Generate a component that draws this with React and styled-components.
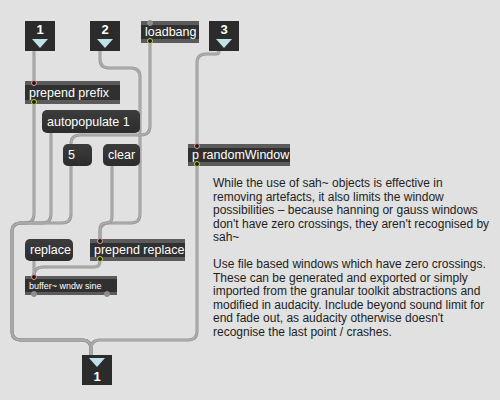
import React from 'react';
import styled, { createGlobalStyle } from 'styled-components';

const GlobalStyle = createGlobalStyle`
    html, body {
        margin: 0;
        padding: 0;
        background: #e1e1e1;
    }
    body {
        font-family: "Liberation Sans", Arial, sans-serif;
    }
`;

const Canvas = styled.div`
    position: relative;
    width: 500px;
    height: 400px;
    overflow: hidden;
    background: #e1e1e1;
`;

const Cords = styled.svg`
    position: absolute;
    left: 0;
    top: 0;
    pointer-events: none;
`;

// every box in the patcher sits at its own place on the canvas
const Node = styled.div`
    position: absolute;
    left: ${(p) => p.$x}px;
    top: ${(p) => p.$y}px;
    width: ${(p) => p.$w}px;
    height: ${(p) => p.$h}px;
    box-sizing: border-box;
`;

const IoBox = styled(Node)`
    background: #2b2b2b;
    display: flex;
    flex-direction: ${(p) => (p.$outlet ? 'column-reverse' : 'column')};
    align-items: center;
    justify-content: center;
    gap: 4px;
    color: #fff;
    font-weight: bold;
    font-size: 13px;
    line-height: 11px;
`;

const Arrow = styled.div`
    width: 0;
    height: 0;
    border-left: 8px solid transparent;
    border-right: 8px solid transparent;
    border-top: 9px solid #bfe2e9;
`;

const ObjBox = styled(Node)`
    background: #303030;
    border-top: ${(p) => p.$bar}px solid #5b5b5b;
    border-bottom: ${(p) => p.$bar}px solid #5b5b5b;
    color: #fff;
    font-size: ${(p) => p.$size || 12.5}px;
    padding-left: 4px;
    display: flex;
    align-items: center;
    white-space: nowrap;
`;

const MsgBox = styled(Node)`
    background: linear-gradient(#3c3c3c, #2c2c2c);
    border-radius: 5px;
    color: #fff;
    font-size: 12.5px;
    padding-left: 5px;
    display: flex;
    align-items: center;
    white-space: nowrap;
`;

const Port = styled.span`
    position: absolute;
    left: ${(p) => p.$x - 3}px;
    ${(p) => (p.$bottom ? 'bottom: -5px;' : 'top: -5px;')}
    width: 6px;
    height: 6px;
    border-radius: 50%;
    box-sizing: border-box;
    border: 1.5px solid ${(p) => (p.$kind === 'in' ? '#e39a8c' : p.$kind === 'out' ? '#c7cf45' : '#8d8d8d')};
    background: ${(p) => (p.$kind === 'idle' ? '#8d8d8d' : '#1c1c1c')};
`;

const Comment = styled.div`
    position: absolute;
    left: 213px;
    top: 177px;
    color: #1e1e1e;
    font-size: 12px;
    line-height: 13.5px;
    white-space: nowrap;
    p {
        margin: 0 0 13.5px 0;
    }
`;

const roundPath = (pts, r = 8) => {
    let d = `M${pts[0][0]},${pts[0][1]}`;
    for (let i = 1; i < pts.length - 1; i++) {
        const [x0, y0] = pts[i - 1];
        const [x1, y1] = pts[i];
        const [x2, y2] = pts[i + 1];
        const l1 = Math.hypot(x1 - x0, y1 - y0);
        const l2 = Math.hypot(x2 - x1, y2 - y1);
        const lim1 = i === 1 ? l1 : l1 / 2;
        const lim2 = i === pts.length - 2 ? l2 : l2 / 2;
        const rr = Math.min(r, lim1, lim2);
        const ax = x1 - ((x1 - x0) / l1) * rr;
        const ay = y1 - ((y1 - y0) / l1) * rr;
        const bx = x1 + ((x2 - x1) / l2) * rr;
        const by = y1 + ((y2 - y1) / l2) * rr;
        d += ` L${ax},${ay} Q${x1},${y1} ${bx},${by}`;
    }
    const last = pts[pts.length - 1];
    return d + ` L${last[0]},${last[1]}`;
};

const loop = [[12, 223], [12, 340], [91, 340], [91, 355]];

const cords = [
    [[34, 51], [34, 81]],
    [[100, 51], [100, 68], [140, 68], [140, 223], [100, 223], [100, 239]],
    [[150, 43], [150, 135], [71, 135], [71, 144]],
    [[34, 104], [34, 223], ...loop],
    [[51, 133], [51, 223], ...loop],
    [[71, 166], [71, 223], ...loop],
    [[112, 166], [112, 223], [100, 223], [100, 239]],
    [[219, 51], [219, 54], [197, 54], [197, 144]],
    [[197, 166], [197, 340], [91, 340], [91, 355]],
    [[100, 261], [100, 267], [34, 267], [34, 276]],
    [[34, 261], [34, 276]],
];

const Inlet = ({ x, y, n, outlet }) => (
    <IoBox $x={x} $y={y} $w={30} $h={30} $outlet={outlet}>
        <span>{n}</span>
        <Arrow />
    </IoBox>
);

const App = () => {
    return (
        <>
            <GlobalStyle />
            <Canvas>
                <Cords width="500" height="400">
                    {cords.map((pts, i) => (
                        <g key={i} fill="none" strokeLinejoin="round">
                            <path d={roundPath(pts, 9)} stroke="#979797" strokeWidth="3" />
                            <path d={roundPath(pts, 9)} stroke="#afafaf" strokeWidth="1.4" />
                        </g>
                    ))}
                </Cords>

                <Inlet x={25} y={21} n="1" />
                <Inlet x={90} y={21} n="2" />
                <ObjBox $x={141} $y={21} $w={58} $h={22} $bar={4}>
                    loadbang
                    <Port $kind="idle" $x={9} />
                    <Port $kind="out" $x={9} $bottom />
                </ObjBox>
                <Inlet x={209} y={21} n="3" />

                <ObjBox $x={25} $y={81} $w={95} $h={23} $bar={4}>
                    prepend prefix
                    <Port $kind="in" $x={9} />
                    <Port $kind="out" $x={9} $bottom />
                </ObjBox>

                <MsgBox $x={42} $y={110} $w={98} $h={23}>autopopulate 1</MsgBox>
                <MsgBox $x={63} $y={144} $w={29} $h={22}>5</MsgBox>
                <MsgBox $x={103} $y={144} $w={37} $h={22}>clear</MsgBox>

                <ObjBox $x={188} $y={144} $w={102} $h={22} $bar={4}>
                    p randomWindow
                    <Port $kind="in" $x={9} />
                    <Port $kind="out" $x={9} $bottom />
                </ObjBox>

                <MsgBox $x={25} $y={239} $w={48} $h={22}>replace</MsgBox>
                <ObjBox $x={90} $y={239} $w={95} $h={22} $bar={4}>
                    prepend replace
                    <Port $kind="in" $x={10} />
                    <Port $kind="out" $x={10} $bottom />
                </ObjBox>

                <ObjBox $x={25} $y={276} $w={92} $h={19} $bar={3} $size={9}>
                    buffer~ wndw sine
                    <Port $kind="in" $x={9} />
                    <Port $kind="idle" $x={9} $bottom />
                    <Port $kind="idle" $x={82} $bottom />
                </ObjBox>

                <Inlet x={82} y={355} n="1" outlet />

                <Comment>
                    <p>
                        While the use of sah~ objects is effective in
                        <br />
                        removing artefacts, it also limits the window
                        <br />
                        possibilities – because hanning or gauss windows
                        <br />
                        don't have zero crossings, they aren't recognised by
                        <br />
                        sah~
                    </p>
                    <p>
                        Use file based windows which have zero crossings.
                        <br />
                        These can be generated and exported or simply
                        <br />
                        imported from the granular toolkit abstractions and
                        <br />
                        modified in audacity. Include beyond sound limit for
                        <br />
                        end fade out, as audacity otherwise doesn't
                        <br />
                        recognise the last point / crashes.
                    </p>
                </Comment>
            </Canvas>
        </>
    );
};

export default App;
